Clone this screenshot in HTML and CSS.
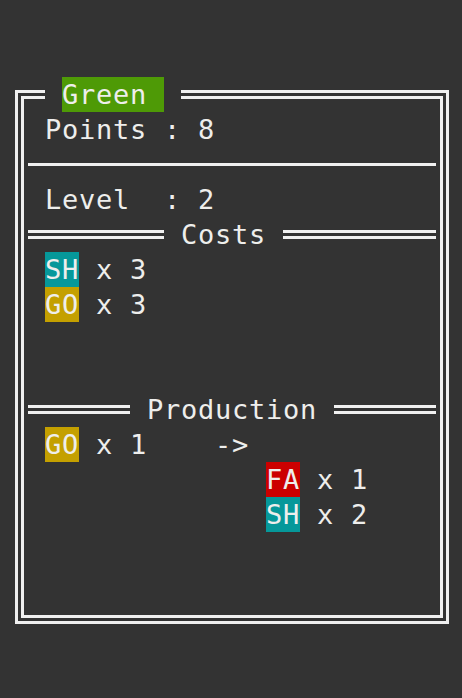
FILE: index.html
```html
<!DOCTYPE html>
<html>
<head>
<meta charset="utf-8">
<link rel="stylesheet" href="styles.css">
</head>
<body>
<div class="frame">
  <div class="title"><span class="chip green">Green </span></div>
  <div class="row">Points : 8</div>
  <div class="rule"><div class="single"></div></div>
  <div class="row">Level  : 2</div>
  <div class="head"><div class="dbl left8"></div><span class="htext"> Costs </span><div class="dbl fill"></div></div>
  <div class="row"><span class="chip teal">SH</span> x 3</div>
  <div class="row"><span class="chip yellow">GO</span> x 3</div>
  <div class="row"></div>
  <div class="row"></div>
  <div class="head"><div class="dbl left6"></div><span class="htext"> Production </span><div class="dbl fill"></div></div>
  <div class="row"><span class="chip yellow">GO</span> x 1    -&gt;</div>
  <div class="row">             <span class="chip red">FA</span> x 1</div>
  <div class="row">             <span class="chip teal">SH</span> x 2</div>
</div>
</body>
</html>
```
FILE: styles.css
```css
html, body {
  margin: 0;
  padding: 0;
  background: #333333;
}
body {
  width: 462px;
  height: 698px;
  overflow: hidden;
  color: #eeeeec;
  font-family: "DejaVu Sans Mono", monospace;
  font-size: 27px;
  letter-spacing: 0.745px;
}
.frame {
  position: relative;
  box-sizing: border-box;
  margin: 90px 0 0 15px;
  width: 434px;
  height: 534px;
  border: 9px double #f0f0f0;
  padding: 13px 4px 0 4px;
}
.title {
  position: absolute;
  top: -22px;
  left: 21px;
  height: 35px;
  padding: 0 17px;
  background: #333333;
}
.row {
  height: 35px;
  line-height: 35px;
  white-space: pre;
  padding-left: 17px;
}
.chip {
  display: inline-block;
  height: 35px;
  line-height: 35px;
  vertical-align: top;
  white-space: pre;
}
.title .chip { line-height: 35px; }
.green { background: #4e9a06; }
.teal { background: #06989a; }
.yellow { background: #c4a000; }
.red { background: #cc0000; }
.rule {
  height: 35px;
  display: flex;
  align-items: center;
}
.single {
  flex: 1;
  height: 3px;
  background: #f0f0f0;
}
.head {
  height: 35px;
  display: flex;
  align-items: center;
  white-space: pre;
  line-height: 35px;
}
.dbl {
  box-sizing: border-box;
  height: 9px;
  border-top: 3px solid #f0f0f0;
  border-bottom: 3px solid #f0f0f0;
}
.left8 { width: 136px; }
.left6 { width: 102px; }
.fill { flex: 1; }
.htext { flex: none; }
```
